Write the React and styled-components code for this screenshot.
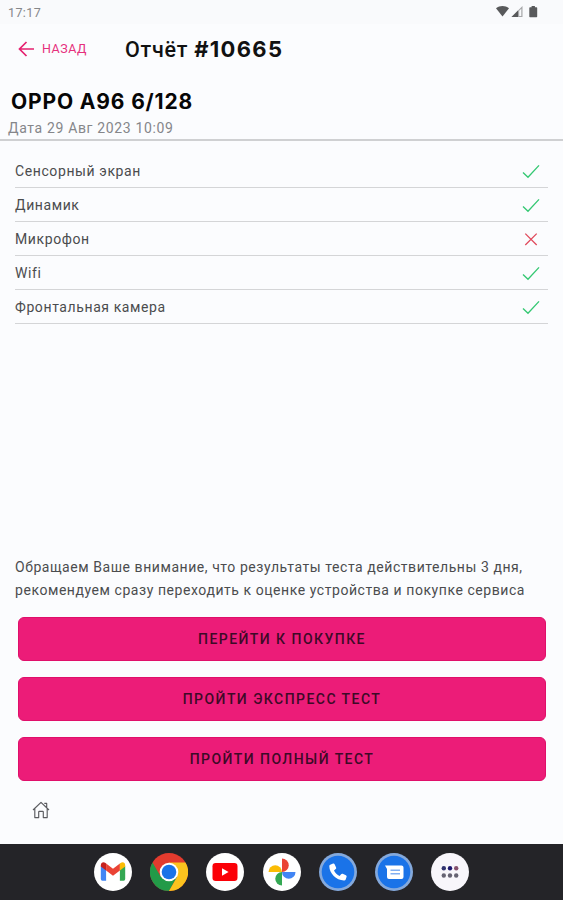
import React from "react";
import styled, { createGlobalStyle } from "styled-components";

const COLORS = {
  pink: "#ec1c78",
  background: "#fbfcfe",
  dock: "#242428",
  green: "#35c873",
  red: "#e04a5c",
};

const GlobalStyle = createGlobalStyle`
  * { box-sizing: border-box; }
  body {
    margin: 0;
    background: ${COLORS.background};
    font-family: Roboto, "Liberation Sans", sans-serif;
  }
`;

const Screen = styled.div`
  display: flex;
  flex-direction: column;
  width: 563px;
  height: 900px;
  overflow: hidden;
  white-space: nowrap;
`;

const StatusBar = styled.div`
  display: flex;
  justify-content: space-between;
  align-items: center;
  height: 24px;
  padding: 0 23px 0 8px;
  background: #f9fafc;
`;

const Clock = styled.span`
  font-size: 12.5px;
  letter-spacing: 0.4px;
  color: #85878a;
`;

const Header = styled.header`
  display: flex;
  align-items: center;
  height: 50px;
  padding-left: 18px;
`;

const BackButton = styled.a`
  display: flex;
  align-items: center;
  width: 107px;
  gap: 7px;
  font-size: 12.5px;
  line-height: 14px;
  letter-spacing: 0.55px;
  color: #e62f7c;
`;

const Title = styled.h1`
  margin: 0;
  padding-bottom: 1px;
  font-size: 21.5px;
  font-weight: 500;
  letter-spacing: 0.75px;
  color: #111;
`;

const Bold = styled.span`
  font-family: Inter, sans-serif;
  font-size: ${props => props.$size || "21px"};
  font-weight: 700;
  letter-spacing: ${props => props.$spacing || "0.85px"};
`;

const Device = styled.section`
  height: 67px;
  padding: 14px 8px 0;
  border-bottom: 2px solid #cfd0d2;
`;

const DeviceName = styled.div`
  padding-left: 3px;
  line-height: 28px;
  color: #060606;
`;

const DeviceDate = styled.div`
  font-size: 14px;
  line-height: 21px;
  letter-spacing: 0.65px;
  color: #85868a;
`;

const TestList = styled.ul`
  flex: 1;
  margin: 0;
  padding: 13px 15px 0;
  list-style: none;
`;

const TestRow = styled.li`
  display: flex;
  justify-content: space-between;
  align-items: center;
  height: 34px;
  padding-right: 8px;
  border-bottom: 1px solid #d4d5d7;
  font-size: 14px;
  letter-spacing: 0.6px;
  color: #4b4c4e;
`;

const Notice = styled.p`
  margin: 0 0 15px 15px;
  font-size: 14px;
  line-height: 23px;
  letter-spacing: 0.56px;
  color: #4b4c4e;
`;

const Actions = styled.div`
  display: flex;
  flex-direction: column;
  gap: 16px;
  padding: 0 17px 0 18px;
`;

const ActionButton = styled.button`
  height: 44px;
  padding: 0 0 1px;
  border: 1px solid #e00f6a;
  border-radius: 6px;
  background: ${COLORS.pink};
  font-family: inherit;
  font-size: 14px;
  font-weight: 500;
  letter-spacing: 1.45px;
  color: #3d0a27;
`;

const HomeBar = styled.nav`
  display: flex;
  align-items: center;
  height: 63px;
  padding: 0 0 5px 32px;
`;

const Dock = styled.footer`
  display: flex;
  justify-content: center;
  align-items: center;
  gap: 18.2px;
  height: 56px;
  background: ${COLORS.dock};
`;

const AppIcon = styled.svg`
  display: block;
  width: 38px;
  height: 38px;
`;

const StatusIcons = () => (
  <svg width="44" height="14" viewBox="0 0 44 14" fill="#58595b">
    <path d="M0 3.2C3.8.1 9.2.1 13 3.2L6.5 11.4z" />
    <path d="M15.5 12L26.5 1v11z" fill="#a5a6a8" />
    <path d="M15.5 12L22 5.5V12z" />
    <path d="M23.2 5.8L25.3 3.7v7.2h-2.1z" fill="#f9fafc" />
    <path d="M34 2.2h1.6V1h3.3v1.2h1.6q.7 0 .7.7v8.6q0 .7-.7.7H34q-.7 0-.7-.7V2.9q0-.7.7-.7z" />
  </svg>
);

const BackArrow = () => (
  <svg width="17" height="16" viewBox="0 0 17 16" fill="none" stroke="#e5206f" strokeWidth="1.7">
    <path d="M16 8H2M8.5 1L1.5 8l7 7" />
  </svg>
);

const ResultIcon = ({ passed }) =>
  passed ? (
    <svg width="18" height="16" viewBox="0 0 18 16" fill="none" stroke={COLORS.green} strokeWidth="1.35">
      <path d="M1 9.6l5 4.7L17 2.4" />
    </svg>
  ) : (
    <svg width="18" height="16" viewBox="0 0 18 16" fill="none" stroke={COLORS.red} strokeWidth="1.3">
      <path d="M3.3 2.6l11.4 11.4M14.7 2.6L3.3 14" />
    </svg>
  );

const HomeIcon = () => (
  <svg width="18" height="18" viewBox="0 0 18 18" fill="none" stroke="#5b5c60" strokeWidth="1.15" strokeLinejoin="round">
    <path d="M1 9L9 1.3 17 9M12.3 2.4h2.4v3.9M2.8 7.5v9.1h3.9v-5.7q0-.6.6-.6h3.4q.6 0 .6.6v5.7h3.9V7.5" />
  </svg>
);

const GmailIcon = () => (
  <AppIcon viewBox="0 0 38 38">
    <circle cx="19" cy="19" r="19" fill="#fff" />
    <path d="M6.8 13v13.1q0 1.6 1.6 1.6h3.7V15.5z" fill="#4285f4" />
    <path d="M25.9 15.5v12.2h3.7q1.6 0 1.6-1.6V13z" fill="#34a853" />
    <path d="M6.8 12.4c0-3 2.8-3.8 4.7-2.3l.6.5v6.9l-5.3-3.9z" fill="#c5221f" />
    <path d="M12.1 10.6l6.9 5.2 6.9-5.2v6.9L19 22.8l-6.9-5.3z" fill="#ea4335" />
    <path d="M31.2 12.4c0-3-2.8-3.8-4.7-2.3l-.6.5v6.9l5.3-3.9z" fill="#fbbc04" />
  </AppIcon>
);

const ChromeIcon = () => (
  <AppIcon viewBox="0 0 38 38">
    <circle cx="19" cy="19" r="19" fill="#e33b2e" />
    <path d="M2.5 9.5A19 19 0 0 0 19 38L27.2 23.8 19 19 10.8 23.8z" fill="#229a48" />
    <path d="M35.5 9.5A19 19 0 0 1 19 38l8.2-14.2L19 9.5z" fill="#fcc31e" />
    <circle cx="19" cy="19" r="9.3" fill="#fff" />
    <circle cx="19" cy="19" r="7.3" fill="#1a73e8" />
  </AppIcon>
);

const YoutubeIcon = () => (
  <AppIcon viewBox="0 0 38 38">
    <circle cx="19" cy="19" r="19" fill="#fff" />
    <rect x="6.5" y="10" width="25" height="18" rx="3.2" fill="#fb0007" />
    <path d="M16 15.2v7.6l6.6-3.8z" fill="#fff" />
  </AppIcon>
);

const PhotosIcon = () => (
  <AppIcon viewBox="0 0 38 38">
    <circle cx="19" cy="19" r="19" fill="#fff" />
    <path d="M19 5.5a6.7 6.7 0 0 1 0 13.5z" fill="#ea4335" />
    <path d="M5.5 19a6.7 6.7 0 0 1 13.5 0z" fill="#fbbc04" />
    <path d="M19 32.5A6.7 6.7 0 0 1 19 19z" fill="#34a853" />
    <path d="M32.5 19A6.7 6.7 0 0 1 19 19z" fill="#4285f4" />
  </AppIcon>
);

const PhoneIcon = () => (
  <AppIcon viewBox="0 0 38 38">
    <circle cx="19" cy="19" r="19" fill="#84a9dc" />
    <circle cx="19" cy="19" r="16.3" fill="#1a73e8" />
    <path
      d="M11.2 11.8l2.9-1.3q1-.4 1.5.7l1.5 3.3q.4 1-.4 1.6L15 17.5c1.2 2.5 3.1 4.4 5.6 5.6l1.5-1.9q.6-.8 1.6-.4l3.2 1.4q1.1.5.7 1.6l-.9 2.6q-.4 1.2-1.7 1.1C17.1 27 10.5 20.5 10.3 13.2q0-1 .9-1.4z"
      fill="#fff"
    />
  </AppIcon>
);

const MessagesIcon = () => (
  <AppIcon viewBox="0 0 38 38">
    <circle cx="19" cy="19" r="19" fill="#84a9dc" />
    <circle cx="19" cy="19" r="16.3" fill="#1a73e8" />
    <path d="M10 12.5h16.5q2 0 2 2v9.5q0 2-2 2H14q-2 0-2-2V16z" fill="#fff" />
    <path d="M15.5 17.3h9.5M15.5 20.7h9.5" stroke="#82aff2" strokeWidth="1.5" />
  </AppIcon>
);

const AllAppsIcon = () => (
  <AppIcon viewBox="0 0 38 38">
    <circle cx="19" cy="19" r="19" fill="#f8f6fb" />
    <circle cx="12.8" cy="15.3" r="2.2" fill="#30336f" />
    <circle cx="19" cy="15.3" r="2.2" fill="#1c176f" />
    <circle cx="25.2" cy="15.3" r="2.2" fill="#85506d" />
    <circle cx="12.8" cy="22.5" r="2.2" fill="#666373" />
    <circle cx="19" cy="22.5" r="2.2" fill="#666373" />
    <circle cx="25.2" cy="22.5" r="2.2" fill="#666373" />
  </AppIcon>
);

const tests = [
  { name: "Сенсорный экран", passed: true },
  { name: "Динамик", passed: true },
  { name: "Микрофон", passed: false },
  { name: "Wifi", passed: true },
  { name: "Фронтальная камера", passed: true },
];

const App = () => (
  <Screen>
    <GlobalStyle />
    <StatusBar>
      <Clock>17:17</Clock>
      <StatusIcons />
    </StatusBar>
    <Header>
      <BackButton>
        <BackArrow />
        НАЗАД
      </BackButton>
      <Title>
        Отчёт <Bold $size="22px" $spacing="1.3px">#10665</Bold>
      </Title>
    </Header>
    <Device>
      <DeviceName>
        <Bold>OPPO A96 6/128</Bold>
      </DeviceName>
      <DeviceDate>Дата 29 Авг 2023 10:09</DeviceDate>
    </Device>
    <TestList>
      {tests.map(test => (
        <TestRow key={test.name}>
          {test.name}
          <ResultIcon passed={test.passed} />
        </TestRow>
      ))}
    </TestList>
    <Notice>
      Обращаем Ваше внимание, что результаты теста действительны 3 дня,
      <br />
      рекомендуем сразу переходить к оценке устройства и покупке сервиса
    </Notice>
    <Actions>
      <ActionButton>ПЕРЕЙТИ К ПОКУПКЕ</ActionButton>
      <ActionButton>ПРОЙТИ ЭКСПРЕСС ТЕСТ</ActionButton>
      <ActionButton>ПРОЙТИ ПОЛНЫЙ ТЕСТ</ActionButton>
    </Actions>
    <HomeBar>
      <HomeIcon />
    </HomeBar>
    <Dock>
      <GmailIcon />
      <ChromeIcon />
      <YoutubeIcon />
      <PhotosIcon />
      <PhoneIcon />
      <MessagesIcon />
      <AllAppsIcon />
    </Dock>
  </Screen>
);

export default App;
